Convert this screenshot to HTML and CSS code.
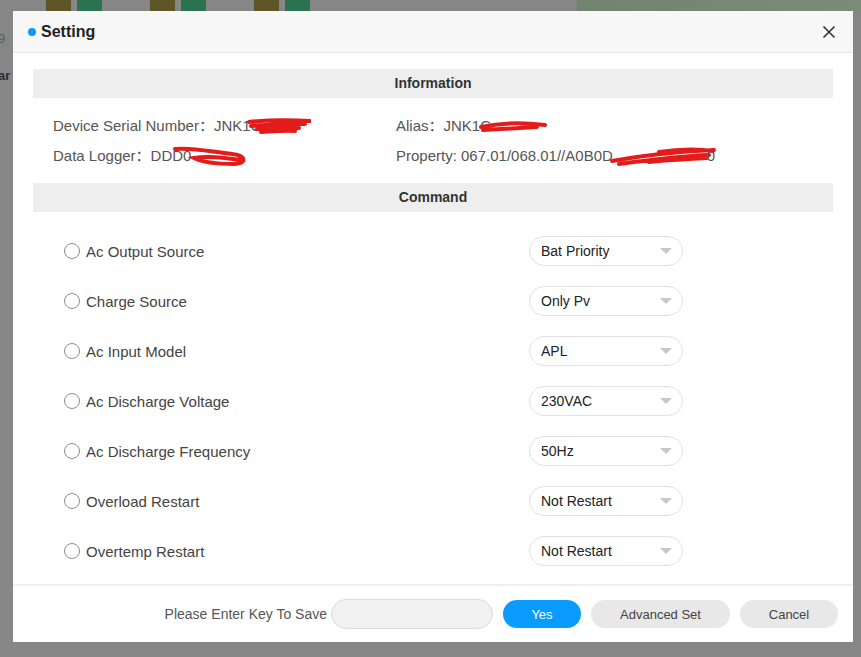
FILE: index.html
```html
<!DOCTYPE html>
<html>
	<head>
		<meta charset="UTF-8">
		<title>Setting</title>
		<link rel="stylesheet" href="styles.css">
	</head>
	<body>

		<div class="backdrop">
			<div class="strip">
				<span class="blk olive"></span><span class="blk green"></span>
				<span class="blk olive"></span><span class="blk green"></span>
				<span class="blk olive"></span><span class="blk green"></span>
				<span class="fill"></span>
				<span class="panel"></span>
			</div>
			<div class="side-text">9</div>
			<div class="side-text bold">ar</div>
		</div>

		<div class="dialog">
			<div class="dialog-head">
				<span class="dot"></span>
				<span class="title">Setting</span>
				<span class="close">
					<svg width="14" height="14" viewBox="0 0 14 14"><path d="M1.5 1.5 L12.5 12.5 M12.5 1.5 L1.5 12.5" stroke="#333" stroke-width="1.6" fill="none"/></svg>
				</span>
			</div>

			<div class="dialog-body">
				<div class="bar">Information</div>
				<div class="info">
					<div class="info-item">Device Serial Number：JNK1C<svg class="scrib" width="64" height="18" viewBox="0 0 64 18" style="margin-left:-14px"><path d="M2 4 C20 2 45 2 63 3 M4 8 C25 6 40 5 58 6 M10 11 C25 10 45 9 52 10 M14 14 C30 13 40 12 48 13" stroke="#e31b1b" stroke-width="4" fill="none" stroke-linecap="round"/></svg></div>
					<div class="info-item">Alias：JNK1C<svg class="scrib" width="68" height="14" viewBox="0 0 68 14" style="margin-left:-12px"><path d="M2 7 C20 3 40 2 66 5 M4 10 C25 9 40 8 58 7" stroke="#e31b1b" stroke-width="4" fill="none" stroke-linecap="round"/></svg></div>
					<div class="info-item">Data Logger：DDD0<svg class="scrib" width="76" height="22" viewBox="0 0 76 22" style="margin-left:-19px"><path d="M3 3 C20 1 40 6 60 8 C76 10 74 18 62 18 C45 18 30 16 22 12 C35 10 55 12 68 14" stroke="#e31b1b" stroke-width="4" fill="none" stroke-linecap="round"/></svg></div>
					<div class="info-item">Property: 067.01/068.01//A0B0D<svg class="scrib" width="108" height="22" viewBox="0 0 108 22" style="margin-left:-4px;margin-right:-10px"><path d="M3 15 C30 10 60 6 105 4 M10 18 C40 14 70 10 100 9 M50 6 C70 3 90 3 104 5 M40 16 C60 14 80 13 98 12" stroke="#e31b1b" stroke-width="4" fill="none" stroke-linecap="round"/></svg>0</div>
				</div>

				<div class="bar">Command</div>
				<ul class="cmds">
					<li class="cmd">
						<label class="opt"><span class="radio"></span>Ac Output Source</label>
						<div class="sel">Bat Priority<span class="caret"></span></div>
					</li>
					<li class="cmd">
						<label class="opt"><span class="radio"></span>Charge Source</label>
						<div class="sel">Only Pv<span class="caret"></span></div>
					</li>
					<li class="cmd">
						<label class="opt"><span class="radio"></span>Ac Input Model</label>
						<div class="sel">APL<span class="caret"></span></div>
					</li>
					<li class="cmd">
						<label class="opt"><span class="radio"></span>Ac Discharge Voltage</label>
						<div class="sel">230VAC<span class="caret"></span></div>
					</li>
					<li class="cmd">
						<label class="opt"><span class="radio"></span>Ac Discharge Frequency</label>
						<div class="sel">50Hz<span class="caret"></span></div>
					</li>
					<li class="cmd">
						<label class="opt"><span class="radio"></span>Overload Restart</label>
						<div class="sel">Not Restart<span class="caret"></span></div>
					</li>
					<li class="cmd">
						<label class="opt"><span class="radio"></span>Overtemp Restart</label>
						<div class="sel">Not Restart<span class="caret"></span></div>
					</li>
				</ul>
			</div>

			<div class="dialog-foot">
				<span class="key-label">Please Enter Key To Save</span>
				<input class="key-input" type="text">
				<button class="btn btn-yes">Yes</button>
				<button class="btn btn-adv">Advanced Set</button>
				<button class="btn btn-cancel">Cancel</button>
			</div>
		</div>

	</body>
</html>
```

FILE: styles.css
```css
html, body{
	margin: 0;
	padding: 0;
}
body{
	width: 861px;
	height: 657px;
	overflow: hidden;
	background: #868686;
	font-family: "Liberation Sans", "Noto Sans CJK SC", sans-serif;
	position: relative;
}

/* page behind the mask */
.backdrop{
	height: 100%;
	color: #5c5c5c;
}
.strip{
	display: flex;
	height: 11px;
	padding-left: 46px;
}
.blk{
	width: 25px;
	margin-right: 6px;
}
.blk.green{
	margin-right: 48px;
}
.olive{ background: #5f5627; }
.green{ background: #2a7250; }
.fill{ flex: 1; }
.panel{
	width: 284px;
	background: linear-gradient(90deg, #718470, #7a8d78);
}
.side-text{
	font-size: 13px;
	margin-top: 20px;
	margin-left: -2px;
}
.side-text.bold{
	font-weight: bold;
	margin-top: 22px;
	color: #2e2e2e;
}

/* dialog */
.dialog{
	position: absolute;
	left: 13px;
	top: 11px;
	width: 840px;
	height: 631px;
	background: #fff;
	display: flex;
	flex-direction: column;
}
.dialog-head{
	height: 41px;
	background: #f7f7f7;
	border-bottom: 1px solid #e6e6e6;
	display: flex;
	align-items: center;
	padding: 0 17px 0 15px;
}
.dot{
	width: 8px;
	height: 8px;
	border-radius: 50%;
	background: #1296fb;
	margin-right: 5px;
}
.title{
	font-size: 16px;
	font-weight: bold;
	color: #222;
	flex: 1;
}
.close{
	display: flex;
}

.dialog-body{
	flex: 1;
	padding: 16px 20px 0;
}
.bar{
	height: 29px;
	line-height: 29px;
	background: #eee;
	text-align: center;
	font-size: 14px;
	font-weight: bold;
	color: #333;
}
.info{
	display: grid;
	grid-template-columns: 343px 1fr;
	padding: 13px 0 12px 20px;
}
.info-item{
	height: 30px;
	line-height: 30px;
	font-size: 15px;
	color: #555;
	white-space: nowrap;
}
.scrib{
	vertical-align: middle;
}

.cmds{
	list-style: none;
	margin: 14px 0 0;
	padding: 0 0 0 31px;
}
.cmd{
	display: grid;
	grid-template-columns: 465px 154px;
	align-items: center;
	height: 50px;
}
.opt{
	display: flex;
	align-items: center;
	font-size: 15px;
	color: #444;
}
.radio{
	width: 14px;
	height: 14px;
	border: 1px solid #8c8c8c;
	border-radius: 50%;
	margin-right: 6px;
}
.sel{
	height: 28px;
	line-height: 28px;
	border: 1px solid #e2e2e2;
	border-radius: 15px;
	padding: 0 11px;
	font-size: 14px;
	color: #222;
	display: flex;
	justify-content: space-between;
	align-items: center;
}
.caret{
	width: 0;
	height: 0;
	border-left: 6px solid transparent;
	border-right: 6px solid transparent;
	border-top: 6px solid #c8c8c8;
	margin-right: -1px;
}

.dialog-foot{
	height: 56px;
	border-top: 2px solid #efefef;
	display: flex;
	align-items: center;
	justify-content: flex-end;
	padding-right: 15px;
}
.key-label{
	font-size: 14px;
	color: #555;
	margin-right: 4px;
}
.key-input{
	width: 162px;
	height: 30px;
	box-sizing: border-box;
	border: 1px solid #dcdcdc;
	border-radius: 15px;
	background: #f1f1f1;
	margin: 0 10px 0 0;
	padding: 0;
}
.btn{
	height: 28px;
	border: none;
	border-radius: 14px;
	font-family: "Liberation Sans", sans-serif;
	font-size: 13px;
	padding: 0;
	margin: 0 10px 0 0;
}
.btn:last-child{
	margin-right: 0;
}
.btn-yes{
	width: 78px;
	background: #0a9bff;
	color: #fff;
}
.btn-adv{
	width: 139px;
	background: #e8e8e8;
	color: #444;
}
.btn-cancel{
	width: 98px;
	background: #e8e8e8;
	color: #444;
}
```
